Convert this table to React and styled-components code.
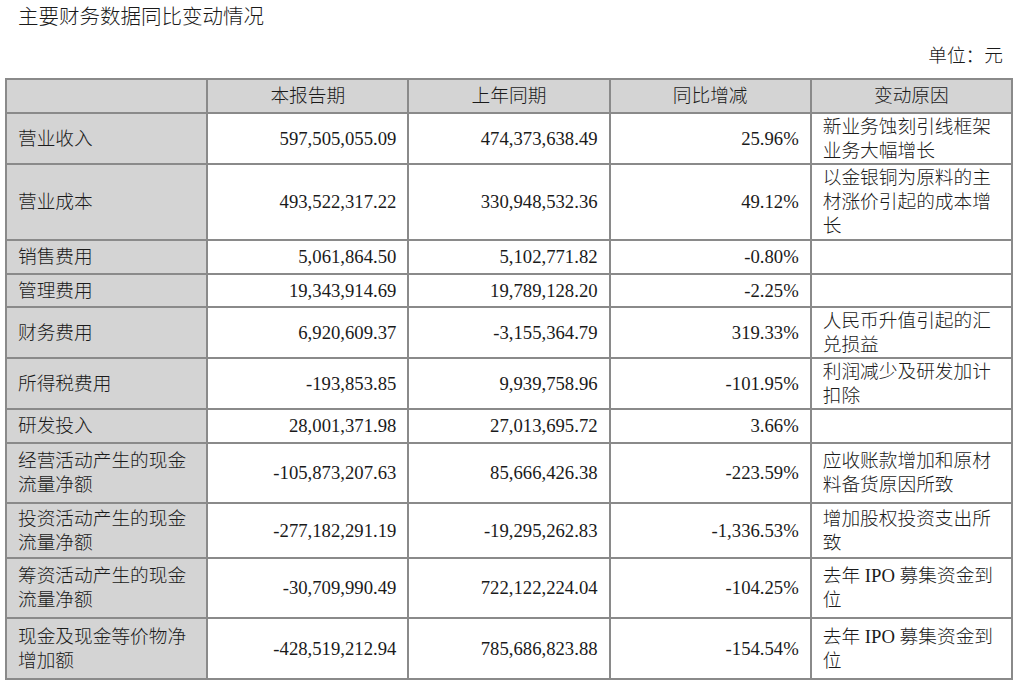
import React from 'react';
import styled, { createGlobalStyle } from 'styled-components';

const GlobalStyle = createGlobalStyle`
  html, body {
    margin: 0;
    padding: 0;
    background: #ffffff;
  }
  body {
    font-family: "Liberation Serif", "Noto Sans CJK SC", serif;
    color: #1a1a1a;
  }
`;

const Page = styled.div`
  width: 1024px;
  padding: 0 11px 0 5px;
  box-sizing: border-box;
`;

const Title = styled.div`
  height: 34px;
  line-height: 34px;
  padding-left: 13px;
  font-size: 20.5px;
  font-weight: 300;
`;

const Unit = styled.div`
  height: 44px;
  line-height: 44px;
  text-align: right;
  padding-right: 10px;
  font-size: 18.7px;
  font-weight: 300;
`;

const Table = styled.table`
  width: 1008px;
  table-layout: fixed;
  border-collapse: collapse;
  font-size: 18.7px;
  font-weight: 300;
  line-height: 24px;
`;

const Row = styled.tr`
  height: ${({ $h }) => $h}px;
`;

const Cell = styled.td`
  border: 2px solid #8a8a8a;
  padding: 0 11px;
  vertical-align: middle;
  background: ${({ $shade }) => ($shade ? '#d4d4d4' : '#ffffff')};
  text-align: ${({ $align }) => $align || 'left'};
  word-break: break-all;
`;

const HeadCell = styled(Cell).attrs({ as: 'th' })`
  font-weight: 300;
  text-align: center;
  background: #d4d4d4;
`;

const headers = ['', '本报告期', '上年同期', '同比增减', '变动原因'];

const rows = [
  ['营业收入', '597,505,055.09', '474,373,638.49', '25.96%', '新业务蚀刻引线框架业务大幅增长', 51],
  ['营业成本', '493,522,317.22', '330,948,532.36', '49.12%', '以金银铜为原料的主材涨价引起的成本增长', 76],
  ['销售费用', '5,061,864.50', '5,102,771.82', '-0.80%', '', 34],
  ['管理费用', '19,343,914.69', '19,789,128.20', '-2.25%', '', 33],
  ['财务费用', '6,920,609.37', '-3,155,364.79', '319.33%', '人民币升值引起的汇兑损益', 51],
  ['所得税费用', '-193,853.85', '9,939,758.96', '-101.95%', '利润减少及研发加计扣除', 51],
  ['研发投入', '28,001,371.98', '27,013,695.72', '3.66%', '', 34],
  ['经营活动产生的现金流量净额', '-105,873,207.63', '85,666,426.38', '-223.59%', '应收账款增加和原材料备货原因所致', 60],
  ['投资活动产生的现金流量净额', '-277,182,291.19', '-19,295,262.83', '-1,336.53%', '增加股权投资支出所致', 55],
  ['筹资活动产生的现金流量净额', '-30,709,990.49', '722,122,224.04', '-104.25%', '去年 IPO 募集资金到位', 60],
  ['现金及现金等价物净增加额', '-428,519,212.94', '785,686,823.88', '-154.54%', '去年 IPO 募集资金到位', 61],
];

export default function App() {
  return (
    <Page>
      <GlobalStyle />
      <Title>主要财务数据同比变动情况</Title>
      <Unit>单位：元</Unit>
      <Table>
        <thead>
          <Row $h={34}>
            {headers.map((h, i) => (
              <HeadCell key={i}>{h}</HeadCell>
            ))}
          </Row>
        </thead>
        <tbody>
          {rows.map(([label, cur, prev, change, reason, h]) => (
            <Row key={label} $h={h}>
              <Cell $shade>{label}</Cell>
              <Cell $align="right">{cur}</Cell>
              <Cell $align="right">{prev}</Cell>
              <Cell $align="right">{change}</Cell>
              <Cell>{reason}</Cell>
            </Row>
          ))}
        </tbody>
      </Table>
    </Page>
  );
}
